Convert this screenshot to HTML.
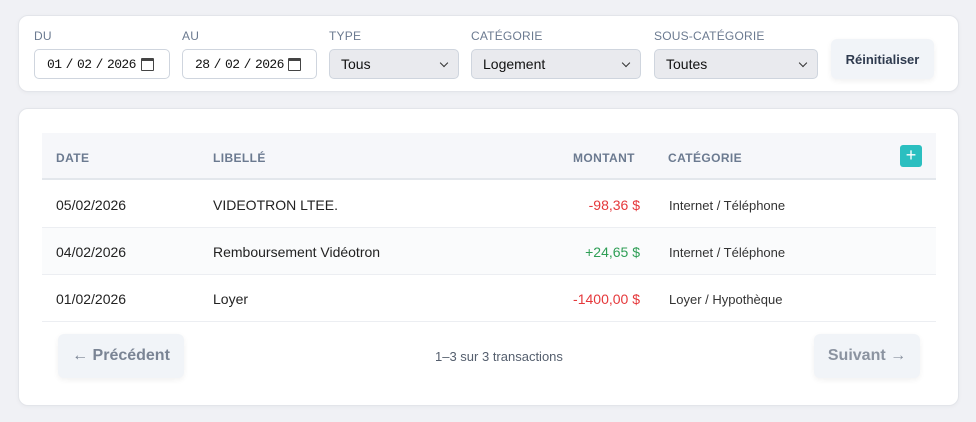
<!DOCTYPE html>
<html><head><meta charset="utf-8"><style>
*{box-sizing:border-box;margin:0;padding:0}
body{width:976px;height:422px;background:#f0f1f5;font-family:"Liberation Sans",sans-serif;position:relative;overflow:hidden}
.card{position:absolute;left:18px;width:941px;background:#fff;border:1px solid #e3e5ea;border-radius:10px;box-shadow:0 1px 4px rgba(0,0,0,.04)}
.lbl{position:absolute;top:29px;font-size:12px;color:#6b7a90;letter-spacing:.2px}
.in{position:absolute;top:49px;height:30px;border:1px solid #cfd5de;border-radius:5px;font-size:14px;display:flex;align-items:center}
.date{background:#fff;font-family:"Liberation Mono",monospace;font-size:13px;padding-left:12px;color:#111;letter-spacing:-0.6px;word-spacing:-3px}
.sel{background:#e9eaee;padding-left:11px;color:#111}
.sel:after{content:"";position:absolute;right:11px;top:10px;width:5px;height:5px;border-right:1.5px solid #333;border-bottom:1.5px solid #333;transform:rotate(45deg)}
.cal{position:absolute;right:15px;top:8px;width:13px;height:13px;border:1.5px solid #444;border-top-width:3px;border-radius:1px}
.btn{position:absolute;background:#f1f4f8;border-radius:6px;box-shadow:0 2px 6px rgba(0,0,0,.06);display:flex;align-items:center;justify-content:center;font-weight:bold}
.th{position:absolute;top:151px;font-size:12px;font-weight:bold;color:#6b7a90;letter-spacing:.4px}
.row{position:absolute;left:42px;width:894px;height:47px;border-bottom:1px solid #eceef2;font-size:14px;color:#222}
.row span{position:absolute;top:16px}
.c{font-size:13px;color:#333}
</style></head><body>
<div class="card" style="top:15px;height:77px"></div>
<div class="lbl" style="left:34px">DU</div>
<div class="lbl" style="left:182px">AU</div>
<div class="lbl" style="left:329px">TYPE</div>
<div class="lbl" style="left:471px">CATÉGORIE</div>
<div class="lbl" style="left:654px">SOUS-CATÉGORIE</div>
<div class="in date" style="left:34px;width:136px">01 / 02 / 2026<div class="cal"></div></div>
<div class="in date" style="left:182px;width:135px">28 / 02 / 2026<div class="cal"></div></div>
<div class="in sel" style="left:329px;width:130px">Tous</div>
<div class="in sel" style="left:471px;width:170px">Logement</div>
<div class="in sel" style="left:654px;width:164px">Toutes</div>
<div class="btn" style="left:831px;top:39px;width:103px;height:40px;font-size:13px;color:#2f3b4f">Réinitialiser</div>

<div class="card" style="top:108px;height:298px"></div>
<div style="position:absolute;left:42px;top:133px;width:894px;height:47px;background:#f6f7fa;border-bottom:2px solid #e3e7ec"></div>
<div class="th" style="left:56px">DATE</div>
<div class="th" style="left:213px">LIBELLÉ</div>
<div class="th" style="left:573px">MONTANT</div>
<div class="th" style="left:668px">CATÉGORIE</div>
<div style="position:absolute;left:900px;top:145px;width:22px;height:22px;background:#2bbfc0;border-radius:3px;color:#fff;font-size:18px;line-height:21px;text-align:center">+</div>

<div class="row" style="top:181px"><span style="left:14px">05/02/2026</span><span style="left:171px">VIDEOTRON LTEE.</span><span style="right:296px;color:#e5383b">-98,36 $</span><span class="c" style="left:627px;top:17px">Internet / Téléphone</span></div>
<div class="row" style="top:228px;background:#fafbfc"><span style="left:14px">04/02/2026</span><span style="left:171px">Remboursement Vidéotron</span><span style="right:296px;color:#2e9e55">+24,65 $</span><span class="c" style="left:627px;top:17px">Internet / Téléphone</span></div>
<div class="row" style="top:275px"><span style="left:14px">01/02/2026</span><span style="left:171px">Loyer</span><span style="right:296px;color:#e5383b">-1400,00 $</span><span class="c" style="left:627px;top:17px">Loyer / Hypothèque</span></div>

<div class="btn" style="left:58px;top:334px;width:126px;height:44px;font-size:16px;color:#7a8494">← Précédent</div>
<div style="position:absolute;left:435px;top:349px;font-size:13px;color:#555f6e">1–3 sur 3 transactions</div>
<div class="btn" style="left:814px;top:334px;width:106px;height:44px;font-size:16px;color:#8b93a0">Suivant →</div>
</body></html>
